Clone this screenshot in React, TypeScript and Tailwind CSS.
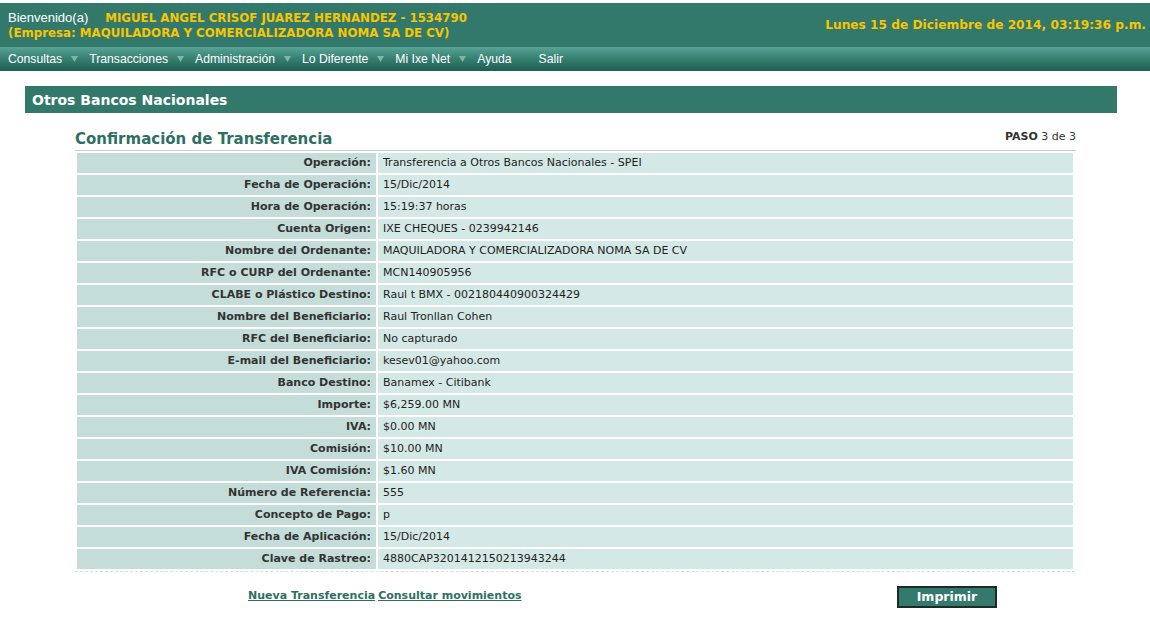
const rows: [string, string][] = [
  ['Operación:', 'Transferencia a Otros Bancos Nacionales - SPEI'],
  ['Fecha de Operación:', '15/Dic/2014'],
  ['Hora de Operación:', '15:19:37 horas'],
  ['Cuenta Origen:', 'IXE CHEQUES - 0239942146'],
  ['Nombre del Ordenante:', 'MAQUILADORA Y COMERCIALIZADORA NOMA SA DE CV'],
  ['RFC o CURP del Ordenante:', 'MCN140905956'],
  ['CLABE o Plástico Destino:', 'Raul t BMX - 002180440900324429'],
  ['Nombre del Beneficiario:', 'Raul Tronllan Cohen'],
  ['RFC del Beneficiario:', 'No capturado'],
  ['E-mail del Beneficiario:', 'kesev01@yahoo.com'],
  ['Banco Destino:', 'Banamex - Citibank'],
  ['Importe:', '$6,259.00 MN'],
  ['IVA:', '$0.00 MN'],
  ['Comisión:', '$10.00 MN'],
  ['IVA Comisión:', '$1.60 MN'],
  ['Número de Referencia:', '555'],
  ['Concepto de Pago:', 'p'],
  ['Fecha de Aplicación:', '15/Dic/2014'],
  ['Clave de Rastreo:', '4880CAP3201412150213943244'],
];

const menu = [
  { label: 'Consultas', arrow: true },
  { label: 'Transacciones', arrow: true },
  { label: 'Administración', arrow: true },
  { label: 'Lo Diferente', arrow: true },
  { label: 'Mi Ixe Net', arrow: true },
  { label: 'Ayuda', arrow: false },
  { label: 'Salir', arrow: false },
];

const verdana = "font-['DejaVu_Sans',Verdana,sans-serif]";

export default function App() {
  return (
    <div className="min-h-[639px] w-[1150px] bg-white">
      <div className="mt-[3px] flex h-[44px] items-center justify-between bg-[#33796b] pl-2 pr-1">
        <div className="leading-[15px]">
          <div className="flex items-baseline">
            <span className="font-['Liberation_Sans',Arial,sans-serif] text-[13px] text-white">Bienvenido(a)</span>
            <span className={`${verdana} ml-[17px] text-[11.8px] font-bold text-[#f7c600]`}>
              MIGUEL ANGEL CRISOF JUAREZ HERNANDEZ - 1534790
            </span>
          </div>
          <div className={`${verdana} text-[11.8px] font-bold text-[#f7c600]`}>
            (Empresa: MAQUILADORA Y COMERCIALIZADORA NOMA SA DE CV)
          </div>
        </div>
        <div className={`${verdana} text-[12.2px] font-bold text-[#f7c600]`}>
          Lunes 15 de Diciembre de 2014, 03:19:36 p.m.
        </div>
      </div>

      <div className="flex h-[24px] items-center bg-gradient-to-b from-[#58a496] via-[#367f70] to-[#1d5e51] pl-2 font-['Liberation_Sans',Arial,sans-serif] text-[12.2px] text-white">
        {menu.map((m) => (
          <div key={m.label} className="mr-[11px] flex items-center">
            <span className={m.label === 'Ayuda' ? 'mr-[16px]' : ''}>{m.label}</span>
            {m.arrow && (
              <svg width="7" height="6" viewBox="0 0 7 6" className="ml-[9px]">
                <path d="M0 0 L7 0 L3.5 6 Z" fill="#7fb6aa" />
              </svg>
            )}
          </div>
        ))}
      </div>

      <div className="ml-[25px] mt-[15px] w-[1092px]">
        <div className={`${verdana} flex h-[27px] items-center bg-[#33796b] pl-[7px] pt-[1px] text-[14px] font-bold text-white`}>
          Otros Bancos Nacionales
        </div>

        <div className="ml-[50px] w-[1001px]">
          <div className="mt-[16px] flex items-end justify-between border-b border-[#cccccc] pb-[2px]">
            <div className={`${verdana} text-[15px] font-bold leading-[18px] text-[#2f6f63]`}>
              Confirmación de Transferencia
            </div>
            <div className={`${verdana} mb-[2px] text-[11px] text-[#333]`}>
              <span className="font-bold">PASO</span> 3 de 3
            </div>
          </div>

          <div className="w-[1000px] border-b border-dashed border-[#cde6e1]">
            <table className={`${verdana} w-[1000px] border-separate border-spacing-[2px] text-[11px] text-[#222]`}>
              <tbody>
                {rows.map(([label, value]) => (
                  <tr key={label} className="h-[20px]">
                    <td className="w-[299px] bg-[#c4ddd8] p-0 pr-[5px] pt-[1px] text-right font-bold text-[#333]">{label}</td>
                    <td className="bg-[#d4e9e5] p-0 pl-[5px] pt-[1px]">{value}</td>
                  </tr>
                ))}
              </tbody>
            </table>
          </div>

          <div className="mt-[14px] flex items-center">
            <div className={`${verdana} ml-[173px] flex gap-[3px] text-[11px] font-bold text-[#2f6f63]`}>
              <a className="underline">Nueva Transferencia</a>
              <a className="underline">Consultar movimientos</a>
            </div>
            <button className={`${verdana} ml-auto mr-[79px] h-[22px] w-[100px] border-2 border-[#1d2b27] bg-[#347a6c] text-[12.5px] font-bold text-white`}>
              Imprimir
            </button>
          </div>
        </div>
      </div>
    </div>
  );
}
